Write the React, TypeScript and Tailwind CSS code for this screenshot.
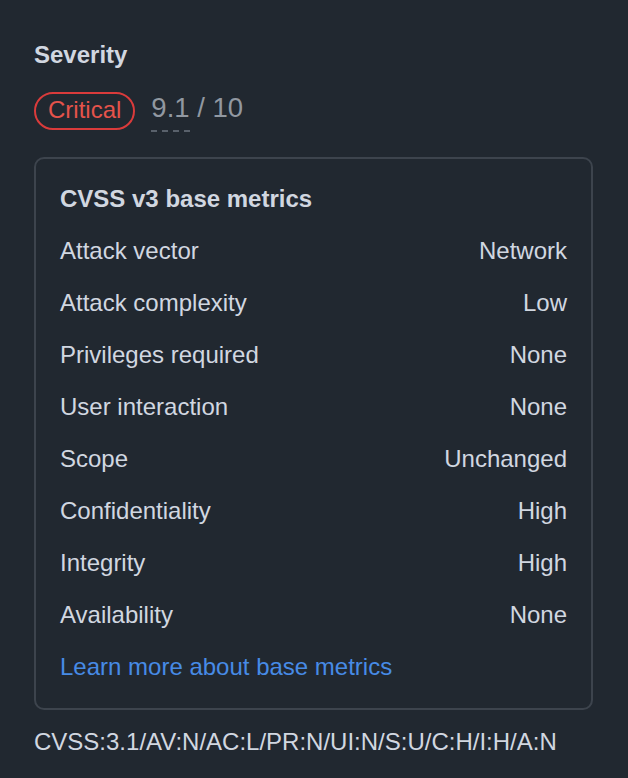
import React from "react";

const rows: [string, string][] = [
  ["Attack vector", "Network"],
  ["Attack complexity", "Low"],
  ["Privileges required", "None"],
  ["User interaction", "None"],
  ["Scope", "Unchanged"],
  ["Confidentiality", "High"],
  ["Integrity", "High"],
  ["Availability", "None"],
];

export default function App() {
  return (
    <div
      className="min-h-screen w-full bg-[#212830] text-[#d1d7e0] pl-[34px] pr-[35px] pt-[37px]"
      style={{ fontFamily: '"Liberation Sans", Arial, sans-serif' }}
    >
      <h3 className="text-[24px] font-bold leading-[36px] text-[#d1d7e0]">Severity</h3>
      <div className="mt-[19px] flex items-start">
        <span className="inline-block rounded-full border-2 border-[#da3b3b] px-[12px] pb-[3px] text-[24px] leading-[31px] text-[#e5534b]">
          Critical
        </span>
        <span className="ml-[16px] mt-[1px] text-[27.5px] leading-[30px] text-[#9198a1]">
          <span className="inline-block border-b-2 border-dashed border-[#59616b] pb-[7px] leading-[30px]">9.1</span>
          <span> / 10</span>
        </span>
      </div>
      <div className="mt-[25px] rounded-[10px] border-2 border-[#3d444d] px-[24px] pt-[14px] pb-[15px]">
        <div className="flex h-[52px] items-center text-[24px] font-bold text-[#d1d7e0]">CVSS v3 base metrics</div>
        {rows.map(([k, v]) => (
          <div key={k} className="flex h-[52px] items-center justify-between text-[24px] text-[#d1d7e0]">
            <span>{k}</span>
            <span>{v}</span>
          </div>
        ))}
        <div className="flex h-[52px] items-center text-[24px]">
          <a href="#" className="text-[#478be6]">Learn more about base metrics</a>
        </div>
      </div>
      <div className="mt-[17px] text-[24px] leading-[30px] text-[#d1d7e0]">
        CVSS:3.1/AV:N/AC:L/PR:N/UI:N/S:U/C:H/I:H/A:N
      </div>
    </div>
  );
}
